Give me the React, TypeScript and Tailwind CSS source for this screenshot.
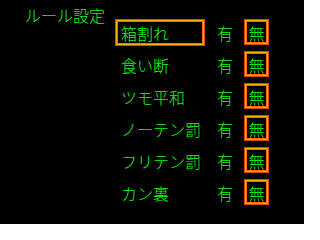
import React from "react";

const rows = ["箱割れ", "食い断", "ツモ平和", "ノーテン罰", "フリテン罰", "カン裏"];

function Frame({ active, className, children }: { active: boolean; className: string; children: React.ReactNode }) {
  return (
    <div className={`${className} ${active ? "border border-[#d84800]" : "border border-transparent"}`}>
      <div className={`w-full h-full ${active ? "border border-[#ffa818]" : "border border-transparent"}`}>
        <div className={`w-full h-full flex items-center ${active ? "border border-[#ff7000]" : "border border-transparent"}`}>
          {children}
        </div>
      </div>
    </div>
  );
}

export default function App() {
  return (
    <div
      className="w-[304px] h-[224px] bg-black text-[#10ff10] text-[16px] leading-[16px] font-light flex"
      style={{ fontFamily: '"Noto Sans CJK JP", "Noto Sans", sans-serif' }}
    >
      <div className="w-[115px] pl-[25px] pt-[7px]">
        <div className="whitespace-nowrap">ルール設定</div>
      </div>
      <div className="flex flex-col pt-[19px]">
        {rows.map((r, i) => (
          <div key={r} className="h-[32px] flex items-start">
            <Frame active={i === 0} className="w-[90px] h-[27px]">
              <span className="pl-[3px] pt-[1px] whitespace-nowrap">{r}</span>
            </Frame>
            <div className="ml-[12px] h-[26px] pt-[1px] flex items-center">有</div>
            <Frame active className="ml-[11px] w-[25px] h-[26px]">
              <span className="w-full pt-[1px] text-center">無</span>
            </Frame>
          </div>
        ))}
      </div>
    </div>
  );
}
